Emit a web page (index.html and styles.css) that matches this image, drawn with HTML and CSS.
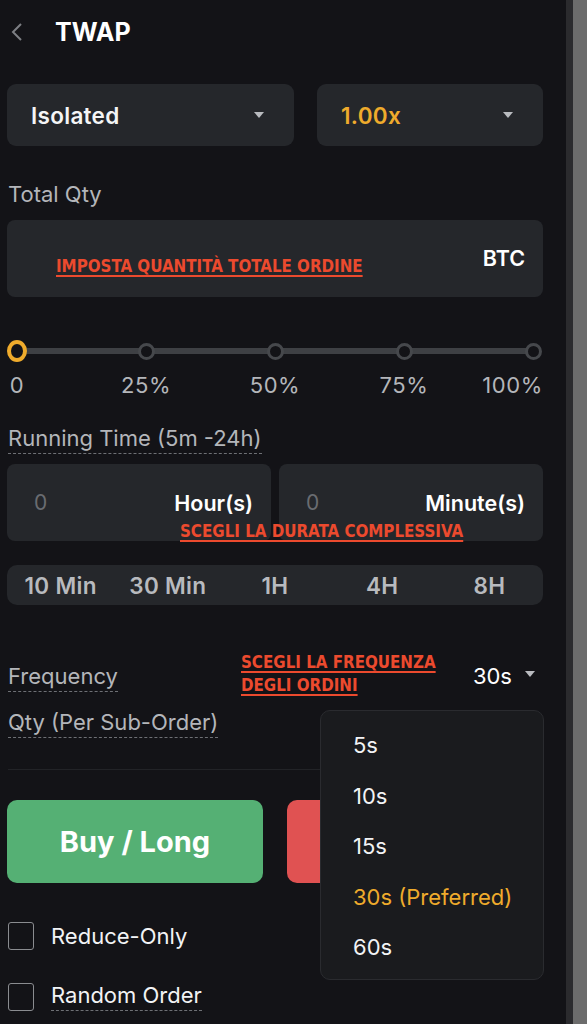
FILE: index.html
```html
<!DOCTYPE html>
<html lang="it">
<head>
<meta charset="utf-8">
<title>TWAP</title>
<link rel="stylesheet" href="styles.css">
</head>
<body>
<div class="panel">
  <header class="header">
    <svg class="back" width="14" height="22" viewBox="0 0 14 22"><path d="M11 3 L3 11 L11 19" fill="none" stroke="#7d7f84" stroke-width="2"/></svg>
    <h1 class="title">TWAP</h1>
  </header>

  <div class="selects">
    <div class="select"><span class="select-text">Isolated</span><span class="caret"></span></div>
    <div class="select"><span class="select-text orange">1.00x</span><span class="caret"></span></div>
  </div>

  <div class="label label-total">Total Qty</div>
  <div class="qty-input">
    <span class="annot annot-qty">IMPOSTA QUANTITÀ TOTALE ORDINE</span>
    <span class="unit">BTC</span>
  </div>

  <div class="slider">
    <div class="track"></div>
    <span class="slot"><span class="thumb"></span></span>
    <span class="slot"><span class="node"></span></span>
    <span class="slot"><span class="node"></span></span>
    <span class="slot"><span class="node"></span></span>
    <span class="slot"><span class="node"></span></span>
  </div>
  <div class="ticks">
    <span class="tick">0</span>
    <span class="tick">25%</span>
    <span class="tick">50%</span>
    <span class="tick">75%</span>
    <span class="tick tick-end">100%</span>
  </div>

  <div class="dashed-row run-label"><span class="dashed">Running Time (5m -24h)</span></div>
  <div class="time-row">
    <div class="time-box"><span class="ph">0</span><span class="unit">Hour(s)</span></div>
    <div class="time-box"><span class="ph">0</span><span class="unit">Minute(s)</span></div>
    <span class="annot annot-time">SCEGLI LA DURATA COMPLESSIVA</span>
  </div>

  <div class="quick">
    <span>10 Min</span><span>30 Min</span><span>1H</span><span>4H</span><span>8H</span>
  </div>

  <div class="freq-row">
    <span class="dashed">Frequency</span>
    <span class="annot annot-freq">SCEGLI LA FREQUENZA<br>DEGLI ORDINI</span>
    <span class="freq-val">30s <span class="caret"></span></span>
    <ul class="menu">
      <li>5s</li>
      <li>10s</li>
      <li>15s</li>
      <li class="orange">30s (Preferred)</li>
      <li>60s</li>
    </ul>
  </div>
  <div class="dashed-row sub-label"><span class="dashed">Qty (Per Sub-Order)</span></div>

  <div class="divider"></div>

  <div class="buttons">
    <button class="btn buy">Buy / Long</button>
    <button class="btn sell"></button>
  </div>

  <div class="check-row check-first"><span class="box"></span><span>Reduce-Only</span></div>
  <div class="check-row check-second"><span class="box"></span><span class="dashed">Random Order</span></div>
</div>
<div class="gutter"></div>
<div class="scrollbar"></div>
</body>
</html>
```

FILE: styles.css
```css
* { box-sizing: border-box; }
html, body { margin: 0; padding: 0; }
body {
  display: flex;
  width: 587px;
  height: 1024px;
  overflow: hidden;
  background: #131317;
  font-family: Inter, "Noto Sans", sans-serif;
  color: #f2f3f5;
}
.panel {
  width: 566px;
  flex: none;
  padding: 0 23px 0 7px;
  position: relative;
}
.gutter { width: 7px; background: #2b2b2e; flex: none; }
.scrollbar { flex: 1; background: #6c6c6c; }

.header {
  height: 64px;
  display: flex;
  align-items: center;
  gap: 31px;
  padding-left: 3px;
}
.back { display: block; }
.title { margin: 0; font-size: 25px; font-weight: 700; color: #fff; }

.selects {
  margin-top: 20px;
  display: grid;
  grid-template-columns: 287px 1fr;
  gap: 23px;
}
.select {
  height: 62px;
  background: #25272b;
  border-radius: 9px;
  display: flex;
  align-items: center;
  justify-content: space-between;
  padding: 0 30px 0 24px;
}
.select-text { font-size: 22.5px; font-weight: 600; color: #f4f5f6; letter-spacing: 0.3px; }
.orange { color: #efab2c !important; }
.caret {
  display: inline-block;
  width: 0; height: 0;
  border-left: 5.5px solid transparent;
  border-right: 5.5px solid transparent;
  border-top: 6px solid #b9bbbf;
}

.label { font-size: 22px; color: #b4b6ba; line-height: 28px; }
.label-total { margin-top: 34px; padding-left: 1px; }

.qty-input {
  position: relative;
  margin-top: 12px;
  height: 77px;
  background: #25272b;
  border-radius: 8px;
  display: flex;
  align-items: center;
  justify-content: flex-end;
  padding-right: 18px;
}
.unit { font-size: 21.5px; font-weight: 600; color: #fff; }
.qty-input .unit { margin-top: -1px; }

.annot {
  position: absolute;
  font-family: "DejaVu Sans Condensed", "DejaVu Sans", sans-serif;
  font-stretch: condensed;
  font-weight: 700;
  font-size: 16.8px;
  line-height: 23px;
  color: #ec4a2e;
  text-decoration: underline;
  text-decoration-thickness: 1.5px;
  text-underline-offset: 3px;
  white-space: nowrap;
}
.annot-qty { left: 49px; top: 35px; }
.annot-time { left: 173px; top: 56px; }
.annot-freq { left: 234px; top: -12px; }

.slider {
  position: relative;
  margin-top: 42px;
  height: 24px;
  display: flex;
  justify-content: space-between;
  align-items: center;
}
.track {
  position: absolute;
  left: 10px; right: 10px;
  top: 9px;
  height: 6px;
  background: #3e4044;
}
.slot { position: relative; width: 20px; display: flex; justify-content: center; align-items: center; }
.thumb {
  width: 22px; height: 22px;
  border-radius: 50%;
  border: 4px solid #efab2c;
  background: #131317;
}
.node {
  width: 17px; height: 17px;
  border-radius: 50%;
  border: 3px solid #46484c;
  background: #131317;
}

.ticks {
  margin-top: 10px;
  display: flex;
  justify-content: space-between;
  line-height: 24px;
  font-size: 22px;
  letter-spacing: 0.6px;
  color: #b4b6ba;
}
.tick { width: 20px; display: flex; justify-content: center; white-space: nowrap; }
.tick-end { justify-content: flex-end; }

.dashed-row { font-size: 22px; color: #b4b6ba; line-height: 26px; }
.dashed { border-bottom: 1px dashed #6e7075; padding-bottom: 2px; display: inline-block; line-height: 26px; }
.run-label { margin-top: 28px; padding-left: 1px; }

.time-row {
  position: relative;
  margin-top: 10px;
  display: grid;
  grid-template-columns: 1fr 1fr;
  gap: 8px;
}
.time-box {
  height: 77px;
  background: #25272b;
  border-radius: 8px;
  display: flex;
  align-items: center;
  justify-content: space-between;
  padding: 0 18px 0 27px;
}
.ph { font-size: 21px; color: #6a6c71; }

.quick {
  margin-top: 24px;
  height: 40px;
  background: #25272b;
  border-radius: 10px;
  display: grid;
  grid-template-columns: repeat(5, 1fr);
  align-items: center;
  justify-items: center;
  font-size: 22.5px;
  font-weight: 600;
  letter-spacing: 0.3px;
  color: #b8babe;
}

.freq-row {
  position: relative;
  margin-top: 58px;
  display: flex;
  justify-content: space-between;
  align-items: flex-start;
  font-size: 22px;
  color: #b4b6ba;
  padding-left: 1px;
}
.freq-val { color: #fff; line-height: 26px; display: flex; align-items: center; gap: 13px; padding-right: 8px; }
.freq-val .caret { margin-top: -4px; }

.menu {
  position: absolute;
  z-index: 2;
  margin: 0;
  list-style: none;
  right: -1px;
  top: 47px;
  width: 224px;
  height: 270px;
  background: #1a1b1e;
  border: 1px solid #2a2b2f;
  border-radius: 10px;
  padding: 21px 0 0 32px;
}
.menu li { font-size: 22px; color: #f2f3f5; line-height: 26px; height: 50.5px; }

.sub-label { margin-top: 17px; padding-left: 1px; }

.divider {
  margin-top: 31px;
  height: 1px;
  background: #222327;
  margin-left: 1px;
}

.buttons {
  margin-top: 30px;
  display: grid;
  grid-template-columns: 256px 1fr;
  gap: 24px;
}
.btn {
  height: 83px;
  border: 0;
  border-radius: 10px;
  font-family: inherit;
  font-size: 29px;
  font-weight: 700;
  color: #fff;
}
.buy { background: #55b074; }
.sell { background: #e05252; }

.check-row {
  display: flex;
  align-items: center;
  gap: 17px;
  font-size: 22px;
  color: #f2f3f5;
  line-height: 28px;
  padding-left: 1px;
}
.check-first { margin-top: 39px; }
.check-second { margin-top: 32px; }
.box {
  width: 26px; height: 28px;
  border: 1.5px solid #8a8c90;
  border-radius: 3px;
  flex: none;
}
```
